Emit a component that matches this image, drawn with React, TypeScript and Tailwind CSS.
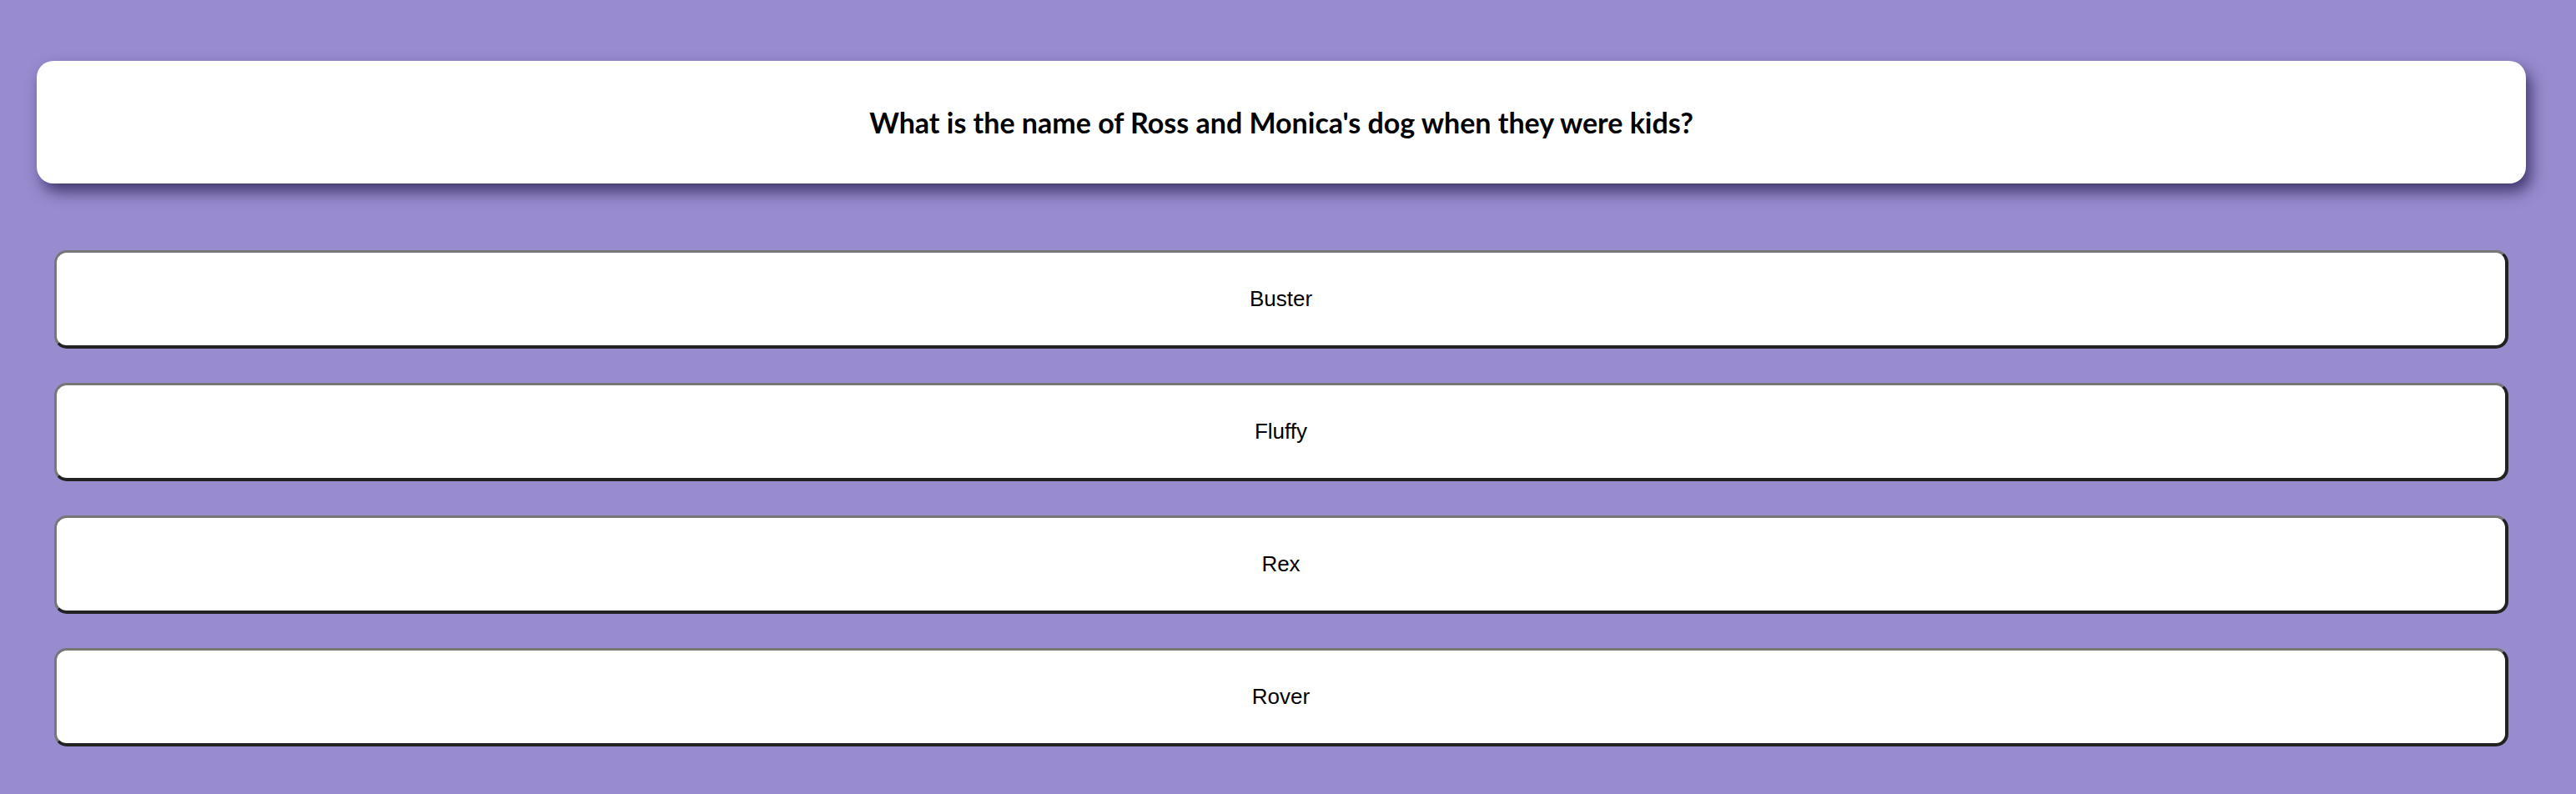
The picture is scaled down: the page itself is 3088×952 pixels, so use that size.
import React from 'react';

const answers = ['Buster', 'Fluffy', 'Rex', 'Rover'];

const App: React.FC = () => {
  return (
    <div className="min-h-screen w-full bg-[#988ccf] pt-[73px] pl-[44px] pr-[60px] pb-[57px]">
      {/* Question card */}
      <div className="h-[147px] bg-white rounded-[20px] shadow-[6px_10px_18px_rgba(30,20,70,0.7)] flex items-center justify-center">
        <h1 className="font-['Lato',sans-serif] font-bold text-[34px] text-black">
          What is the name of Ross and Monica's dog when they were kids?
        </h1>
      </div>

      {/* Answers */}
      <div className="mt-[80px] mx-[21px] flex flex-col gap-[41px]">
        {answers.map((a) => (
          <button
            key={a}
            className="h-[118px] w-full bg-white rounded-[15px] border-[3px] border-solid border-t-[#777777] border-l-[#777777] border-b-[#222222] border-r-[#222222] border-b-[4px] border-r-[4px] font-['Liberation_Sans',Arial,sans-serif] text-[26px] text-black"
          >
            {a}
          </button>
        ))}
      </div>
    </div>
  );
};

export default App;
